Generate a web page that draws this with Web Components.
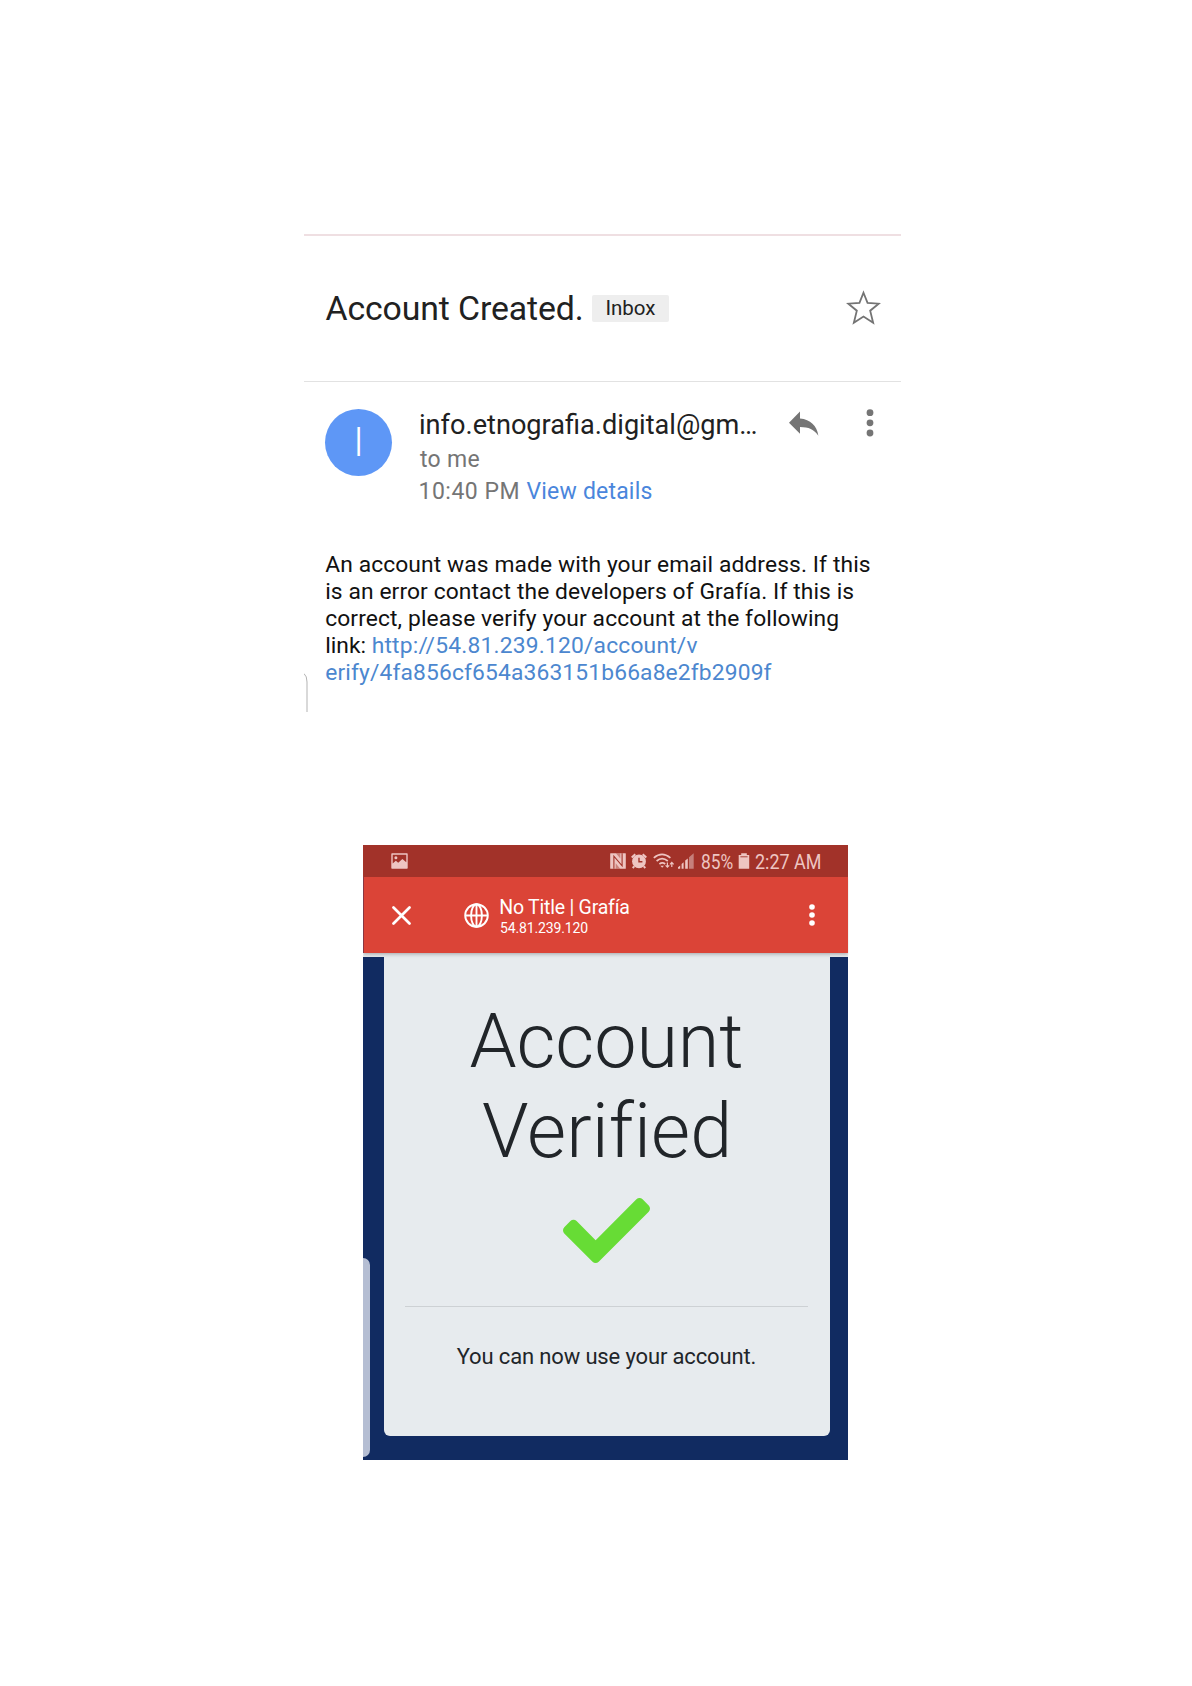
<!DOCTYPE html>
<html lang="en">
<head>
<meta charset="utf-8">
<title>Account mail and verification</title>
<style>
html,body{margin:0;background:#fff}
body{font-family:Roboto,"Liberation Sans",sans-serif;min-height:1686px}
</style>
</head>
<body>
<account-page></account-page>
<script>
const define=(name,html)=>customElements.define(name,class extends HTMLElement{
  connectedCallback(){
    if(this.shadowRoot)return;
    const t=document.createElement('template');
    t.innerHTML=html;
    this.attachShadow({mode:'open'}).append(t.content.cloneNode(true));
  }
});

/* One line of text set to a given measure: by tracking, or by condensing with mode="scale". */
class TextLine extends HTMLElement{
  connectedCallback(){
    if(this.shadowRoot)return;
    this.attachShadow({mode:'open'}).innerHTML=`<style>
      :host{display:inline-block;white-space:pre;vertical-align:top}
      span{display:inline-block;transform-origin:0 50%}</style><span><slot></slot></span>`;
    const s=this.shadowRoot.querySelector('span'),w=+this.getAttribute('measure');
    const natural=s.getBoundingClientRect().width;
    this.style.width=w+'px';
    if(this.getAttribute('mode')==='scale')s.style.transform=`scaleX(${w/natural})`;
    else s.style.letterSpacing=(w-natural)/this.textContent.length+'px';
  }
}
customElements.define('text-line',TextLine);

const icons={
  star:['0 0 33 33','<path d="M16.5 2.6 20.3 12.2 30.8 12.9 22.8 19.5 25.6 30.8 16.5 25 7.4 30.8 10.2 19.5 2.2 12.9 12.7 12.2Z" fill="none" stroke="#747474" stroke-width="1.7"/>'],
  reply:['0 0 30 25','<path d="M11 .6V7.6C21.5 8.6 27.7 14.6 29.4 24.8 25 18.4 19.7 16.2 11 16.1V22.8L0 11.7Z" fill="#757575"/>'],
  dots:['0 0 8 28','<g fill="#757575"><circle cx="4" cy="3.7" r="3.4"/><circle cx="4" cy="13.8" r="3.4"/><circle cx="4" cy="24" r="3.4"/></g>'],
  menu:['0 0 6 22','<g fill="#fff"><circle cx="3" cy="3" r="2.8"/><circle cx="3" cy="11" r="2.8"/><circle cx="3" cy="19" r="2.8"/></g>'],
  close:['0 0 19 19','<path d="M1.5 1.5 17.5 17.5M17.5 1.5 1.5 17.5" stroke="#fff" stroke-width="2.7" stroke-linecap="round"/>'],
  globe:['0 0 25 25','<g fill="none" stroke="#fff" stroke-width="1.9"><circle cx="12.5" cy="12.5" r="11.3"/><ellipse cx="12.5" cy="12.5" rx="5.4" ry="11.3"/><path d="M12.5 1V24M1 12.5H24"/></g>'],
  picture:['0 0 17 16','<path fill="#eec5c2" fill-rule="evenodd" d="M1 .3H16Q16.7.3 16.7 1V15Q16.7 15.7 16 15.7H1Q.3 15.7.3 15V1Q.3.3 1 .3ZM1.7 1.7V10.5L4.8 7.7 7.2 9.7 11.4 6 15.3 9.2V1.7ZM3.4 4.8A1.5 1.5 0 1 0 6.4 4.8A1.5 1.5 0 1 0 3.4 4.8Z"/>'],
  nfc:['0 0 16 16','<rect x=".2" y=".2" width="15.600" height="15.600" rx=".5" fill="#eec5c2"/><path d="M3.900 15.800V3.200L12.100 12.800V.2" fill="none" stroke="#a23229" stroke-width="1.100"/><path d="M5.900.2 10.300 5.500V.2ZM5.700 15.800V10.200L10.200 15.800Z" fill="#a23229" opacity=".45"/>'],
  alarm:['0 0 16 16','<path d="M.7 4.5 4.3 1.2M11.7 1.2 15.3 4.5M3.2 13.4 1.7 15M12.8 13.4 14.3 15" stroke="#eec5c2" stroke-width="2"/><circle cx="8" cy="8.4" r="6.9" fill="#eec5c2"/><path d="M8 4.8V8.8H11.4" stroke="#a23229" stroke-width="1.4" fill="none"/>'],
  wifi:['0 0 22 17','<g fill="none" stroke="#eec5c2" stroke-width="1.7"><path d="M.8 4.800Q9-2.200 17.400 4.800M3.600 8Q9 3.400 14.800 8M6.400 11Q9.300 8.700 12.200 11"/></g><path d="M7.300 12.700H11L9.200 14.800Z" fill="#eec5c2"/><path d="M14.400 9.500V14M12.600 12.300 14.400 14.200 16.200 12.300M18.800 14V9.800M17 11.300 18.800 9.400 20.600 11.300" fill="none" stroke="#eec5c2" stroke-width="1.200"/>'],
  signal:['0 0 17 17','<path d="M0 15.700V14.200L2.200 12.600V15.700ZM3.600 15.700V11L5.600 9.200V15.700ZM7.200 15.700V7.600L9.800 5.400V15.700Z" fill="#eec5c2"/><path d="M11 15.700V4.300L15.700.300V15.700Z" fill="#c6807b"/>'],
  battery:['0 0 12 16','<path d="M3.2.2H8.8V2H11.2V15.7H.7V2H3.2Z" fill="#eec5c2"/><path d="M2.4 3.8H9.6" stroke="#a23229" stroke-width=".9"/>'],
  check:['0 65 512 382','<path fill="#67dc35" d="M173.9 439.4 7.5 273c-10-10-10-26.200 0-36.200l36.200-36.200c10-10 26.200-10 36.200 0L192 312.700 432.100 72.600c10-10 26.200-10 36.200 0l36.200 36.200c10 10 10 26.200 0 36.200L210.100 439.400c-10 10-26.200 10-36.200 0Z"/>'],
  edge:['0 0 5 39','<path d="M0 .6Q3 3 3 9V39" fill="none" stroke="#b3b3b3" stroke-width="1"/>']
};
customElements.define('ui-icon',class extends HTMLElement{
  connectedCallback(){
    if(this.shadowRoot)return;
    const [vb,body]=icons[this.getAttribute('name')];
    const w=this.getAttribute('w'),h=this.getAttribute('h');
    this.attachShadow({mode:'open'}).innerHTML=`<style>:host{display:block;flex:none;width:${w}px;height:${h}px}svg{display:block}</style><svg width="${w}" height="${h}" viewBox="${vb}" aria-hidden="true">${body}</svg>`;
  }
});

define('mail-subject',`<style>
:host{display:flex;align-items:center;box-sizing:border-box;height:148px;border-top:2px solid #efdfe2;border-bottom:1px solid #e2e2e2;padding:0 19.500px 0 22px;color:#212121}
.t{font-size:33.800px;line-height:40px}
.b{background:#eee;border-radius:2px;height:27px;line-height:26px;font-size:20.500px;padding:0 13px 0 13.500px;margin-left:8.500px}
ui-icon{margin:0 0 2px auto}
</style><text-line class="t" measure="258">Account Created.</text-line><span class="b"><text-line measure="50">Inbox</text-line></span><ui-icon name="star" w="35" h="35"></ui-icon>`);

define('mail-sender',`<style>
:host{display:flex;align-items:flex-start;padding:23.600px 26.500px 0 21.500px}
.a{width:67px;height:67px;border-radius:50%;background:#5e97f6;color:#fff;display:flex;justify-content:center;font-size:40px;font-weight:300;line-height:67px;margin-top:3.400px}
.i{margin-left:26.500px;width:340px;color:#757575;font-size:23px;line-height:31.400px}
.s{display:block;font-size:27.500px;line-height:38px;color:#212121}
.r{display:flex}.m{margin-left:1.500px}
.d{margin-top:.8px}
.v{color:#4a86dc;margin-left:6.500px}
.reply{margin:5px 0 0 30px}.more{margin:3px 0 0 auto}
</style><div class="a">I</div><div class="i"><text-line class="s" mode="scale" measure="338.500">info.etnografia.digital@gm…</text-line><div class="r m"><text-line measure="60">to me</text-line></div><div class="r d"><text-line measure="101.500">10:40 PM</text-line><text-line class="v" measure="126">View details</text-line></div></div><ui-icon class="reply" name="reply" w="30" h="25"></ui-icon><ui-icon class="more" name="dots" w="8" h="28"></ui-icon>`);

define('mail-body',`<style>
:host{display:block;margin-top:43.500px;padding-left:21.700px;font-size:22.800px;line-height:27px;color:#111}
div{display:flex}.u{color:#4c87cf}
</style><div><text-line measure="545.500">An account was made with your email address. If this</text-line></div>
<div><text-line measure="529">is an error contact the developers of Grafía. If this is</text-line></div>
<div><text-line measure="514">correct, please verify your account at the following</text-line></div>
<div><text-line measure="46.500">link: </text-line><text-line class="u" measure="326">http://54.81.239.120/account/v</text-line></div>
<div><text-line class="u" measure="446.500">erify/4fa856cf654a363151b66a8e2fb2909f</text-line></div>`);

define('mail-view',`<style>
:host{display:block;position:relative;width:597px;height:478px;margin-left:303.500px}
.e{position:absolute;left:0;bottom:0}
</style><mail-subject></mail-subject><mail-sender></mail-sender><mail-body></mail-body><ui-icon class="e" name="edge" w="5" h="39"></ui-icon>`);

define('status-bar',`<style>
:host{display:flex;height:32px;background:#a23229;color:#eec5c2;padding:0 27px 0 28px;align-items:center;font-size:20.500px;line-height:34px}
text-line{margin-top:2px}
.g{display:flex;align-items:center;margin-left:auto}
</style><ui-icon name="picture" w="17" h="16"></ui-icon><div class="g">
<ui-icon name="nfc" w="16" h="16"></ui-icon><ui-icon name="alarm" w="16" h="16" style="margin-left:5px"></ui-icon><ui-icon name="wifi" w="22" h="17" style="margin-left:6px"></ui-icon><ui-icon name="signal" w="17" h="17" style="margin-left:3px"></ui-icon>
<text-line mode="scale" measure="32.200" style="margin-left:6px">85%</text-line><ui-icon name="battery" w="12" h="16" style="margin-left:4.500px"></ui-icon><text-line mode="scale" measure="66.500" style="margin-left:5px">2:27 AM</text-line></div>`);

define('browser-bar',`<style>
:host{display:flex;height:76px;background:#db4437;color:#fff;padding:0 33.500px 0 28.500px;align-items:center;position:relative;box-shadow:0 1px 4px rgba(0,0,0,.3)}
.globe{margin-left:53.500px}.t{margin:5px 0 0 9.800px;display:flex;flex-direction:column}
.n{font-size:19.500px;line-height:22px}.h{font-size:14px;line-height:19px;margin-left:.8px}
.m{margin-left:auto}
</style><ui-icon name="close" w="19" h="19"></ui-icon><ui-icon class="globe" name="globe" w="25" h="25"></ui-icon><div class="t"><text-line class="n" measure="130.500">No Title | Grafía</text-line><text-line class="h" measure="88">54.81.239.120</text-line></div><ui-icon class="m" name="menu" w="6" h="22"></ui-icon>`);

define('verified-card',`<style>
:host{display:flex;flex-direction:column;align-items:center;box-sizing:border-box;width:446px;height:483px;margin-left:20.300px;background:#e7ebee;border-radius:0 0 6px 6px;padding:43px 22px 0 21.500px;color:#212529}
.h{font-weight:300;font-size:75.500px;line-height:90px}
.c{margin-top:22px}hr{align-self:stretch;border:0;height:1px;background:#cdd1d4;margin:43px 0 37.200px}
.p{font-size:22px;line-height:26px}
</style><text-line class="h" measure="274">Account</text-line><text-line class="h" measure="249">Verified</text-line><ui-icon class="c" name="check" w="87" h="65"></ui-icon><hr><text-line class="p" measure="299.500">You can now use your account.</text-line>`);

define('phone-view',`<style>
:host{display:block;width:485px;height:615px;margin:133px 0 0 363.400px;background:#112b61;position:relative}
.w{background:linear-gradient(#e7ebee 4px,transparent 4px)}
browser-bar{z-index:1;clip-path:inset(0 0 -6px 0)}
.e{position:absolute;left:0;bottom:3px;width:6.500px;height:199px;background:#b5bed3;border-radius:0 7px 7px 0}
</style><status-bar></status-bar><browser-bar></browser-bar><div class="w"><verified-card></verified-card></div><div class="e"></div>`);

define('account-page',`<style>:host{display:flex;flex-direction:column;align-items:flex-start;box-sizing:border-box;width:1192px;height:1686px;padding-top:234px;background:#fff}</style><mail-view></mail-view><phone-view></phone-view>`);
</script>
</body>
</html>
